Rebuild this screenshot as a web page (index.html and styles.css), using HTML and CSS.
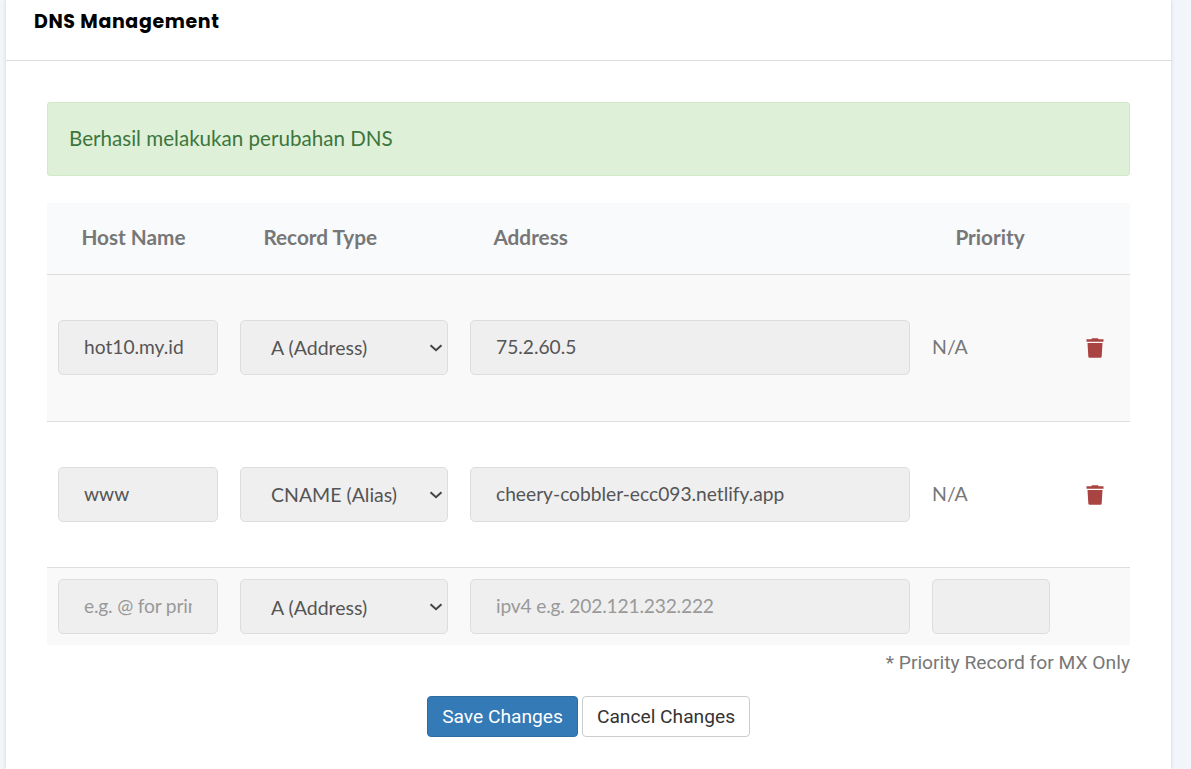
FILE: index.html
```
<!DOCTYPE html>
<html lang="id">
<head>
<meta charset="utf-8">
<title>DNS Management</title>
<link rel="stylesheet" href="styles.css">
</head>
<body>
<main class="panel">
  <header class="panel-head"><h1 class="title">DNS Management</h1></header>
  <div class="panel-body">
    <div class="alert">Berhasil melakukan perubahan DNS</div>
    <div class="table">
      <div class="row head">
        <div class="th">Host Name</div><div class="th">Record Type</div><div class="th">Address</div><div class="th">Priority</div><div></div>
      </div>
      <div class="row record odd">
        <div class="cell"><input class="field" value="hot10.my.id"></div>
        <div class="cell select-wrap"><select class="field select"><option>A (Address)</option></select><svg class="chevron" viewBox="0 0 14 8"><path d="M1.5 1.2 7 6.2l5.5-5"/></svg></div>
        <div class="cell"><input class="field" value="75.2.60.5"></div>
        <div class="cell na">N/A</div>
        <div class="cell action"><svg class="trash" viewBox="0 0 18 20"><path d="M6 .3h6l.6 1H17.500v2.500H.5V1.300h4.900zM1.500 5h15l-.8 13.500q-.1 1.200-1.300 1.200H3.600q-1.200 0-1.300-1.200z"/></svg></div>
      </div>
      <div class="row record second">
        <div class="cell"><input class="field" value="www"></div>
        <div class="cell select-wrap"><select class="field select"><option>CNAME (Alias)</option></select><svg class="chevron" viewBox="0 0 14 8"><path d="M1.5 1.2 7 6.2l5.5-5"/></svg></div>
        <div class="cell"><input class="field" value="cheery-cobbler-ecc093.netlify.app"></div>
        <div class="cell na">N/A</div>
        <div class="cell action"><svg class="trash" viewBox="0 0 18 20"><path d="M6 .3h6l.6 1H17.500v2.500H.5V1.300h4.900zM1.500 5h15l-.8 13.500q-.1 1.200-1.300 1.200H3.600q-1.200 0-1.300-1.200z"/></svg></div>
      </div>
      <div class="row new odd">
        <div class="cell"><input class="field" placeholder="e.g. @ for primary domain"></div>
        <div class="cell select-wrap"><select class="field select last"><option>A (Address)</option></select><svg class="chevron" viewBox="0 0 14 8"><path d="M1.5 1.2 7 6.2l5.5-5"/></svg></div>
        <div class="cell"><input class="field" placeholder="ipv4 e.g. 202.121.232.222"></div>
        <div class="cell"><input class="field"></div>
        <div></div>
      </div>
    </div>
    <p class="note">* Priority Record for MX Only</p>
    <div class="buttons"><button class="btn primary">Save Changes</button><button class="btn">Cancel Changes</button></div>
  </div>
</main>
</body>
</html>
```
FILE: styles.css
```
* { box-sizing: border-box; }
body {
  margin: 0;
  height: 769px;
  overflow: hidden;
  padding: 0 20px 0 6px;
  background: #f2f6fa;
  font-family: Lato, sans-serif;
  font-size: 20.6px;
}
.panel {
  height: 100%;
  width: 1165px;
  background: #fff;
  box-shadow: 0 0 4px rgba(0, 0, 0, .14);
}
.panel-head {
  height: 61px;
  padding: 7px 28px 0;
  border-bottom: 1px solid #ddd;
}
.title {
  margin: 0;
  font: 700 19px/30px Poppins, Inter, sans-serif;
  letter-spacing: .63px;
  color: #000;
}
.panel-body { padding: 41px 41px 0; }
.alert {
  height: 74px;
  padding: 0 21px;
  border: 1px solid #d0e9c6;
  border-radius: 3px;
  background: #dff0d8;
  color: #3c763d;
  line-height: 71px;
}
.table { margin-top: 27px; }
.row {
  display: grid;
  grid-template-columns: 182px 230px 462px 140px 69px;
  align-items: center;
}
.head {
  height: 72px;
  padding-bottom: 4px;
  border-bottom: 1px solid #ddd;
  background: #f8fafc;
}
.th {
  padding-left: 34.4px;
  color: #777;
  font-size: 20.75px;
  font-weight: 700;
}
.record {
  height: 147px;
  padding-bottom: 1px;
  border-bottom: 1px solid #ddd;
}
.second { height: 146px; padding-bottom: 0; }
.new { height: 77px; }
.odd { background: #f9f9f9; }
.cell { padding: 0 11px; }
.field {
  display: block;
  width: 100%;
  height: 55px;
  padding: 0 25px 2px;
  border: 1px solid #ddd;
  border-radius: 5px;
  outline: 0;
  background: #efefef;
  color: #555;
  font: 400 19.2px Lato, sans-serif;
}
.field::placeholder { color: #999; opacity: 1; letter-spacing: -.18px; }
.select {
  appearance: none;
  padding: 0 25px 0 30px;
  font-size: 19.5px;
}
.last { padding-top: 1px; }
.select-wrap { position: relative; }
.chevron {
  position: absolute;
  right: 16px;
  top: 23.500px;
  width: 14px;
  height: 8px;
  fill: none;
  stroke: #444;
  stroke-width: 2;
  pointer-events: none;
}
.na {
  padding-bottom: 3px;
  color: #777;
  font-size: 19.5px;
}
.action { padding-left: 25px; padding-top: 1px; }
.trash {
  display: block;
  width: 18px;
  height: 20px;
  fill: #a94442;
}
.note {
  margin: 0;
  padding-top: 4px;
  font: 400 19.25px/28px Roboto, sans-serif;
  color: #777;
  text-align: right;
}
.buttons {
  display: flex;
  justify-content: center;
  gap: 4px;
  margin-top: 19px;
}
.btn {
  width: 168px;
  height: 41px;
  padding: 0;
  border: 1px solid #ccc;
  border-radius: 4px;
  background: #fff;
  color: #333;
  font: 400 19.2px Roboto, sans-serif;
}
.primary {
  width: 151px;
  border-color: #2e6da4;
  background: #337ab7;
  color: #fff;
}
```
